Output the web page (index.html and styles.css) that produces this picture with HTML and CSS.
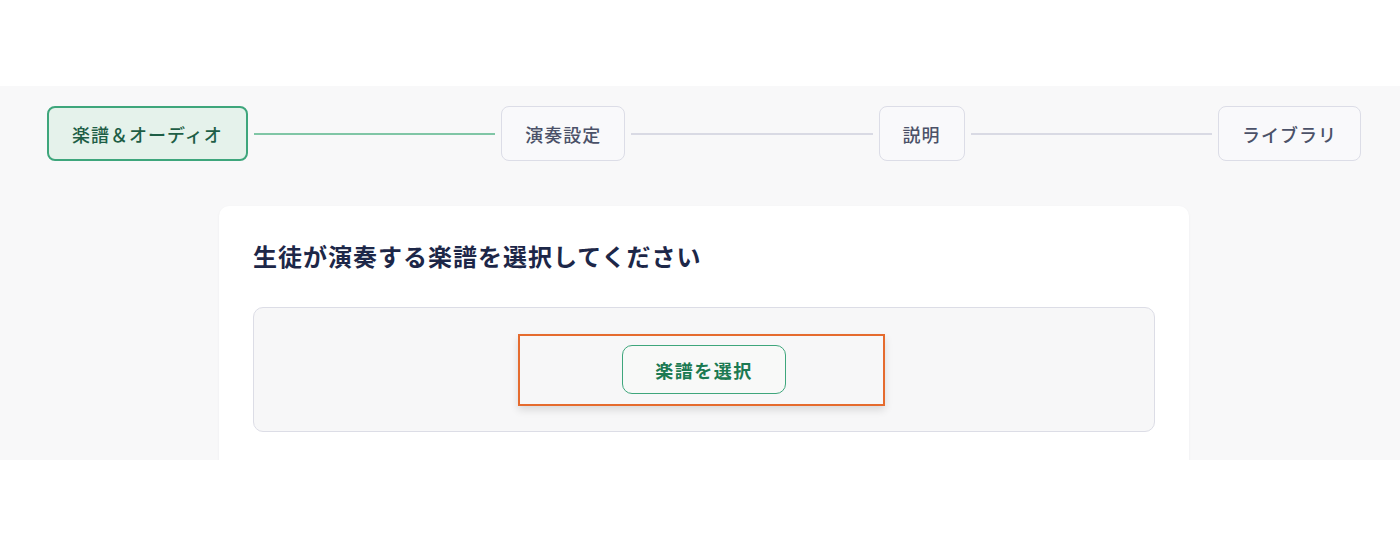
FILE: index.html
```html
<!DOCTYPE html>
<html lang="ja">
<head>
<meta charset="utf-8">
<link rel="stylesheet" href="styles.css">
</head>
<body>
<div class="top-space"></div>
<section class="stage">
  <nav class="steps">
    <div class="step active">楽譜＆オーディオ</div>
    <div class="line done"></div>
    <div class="step">演奏設定</div>
    <div class="line"></div>
    <div class="step">説明</div>
    <div class="line"></div>
    <div class="step">ライブラリ</div>
  </nav>
  <div class="card">
    <h2 class="title">生徒が演奏する楽譜を選択してください</h2>
    <div class="dropzone">
      <div class="highlight">
        <button class="pick">楽譜を選択</button>
      </div>
    </div>
  </div>
</section>
</body>
</html>
```

FILE: styles.css
```css
html, body {
  margin: 0;
  padding: 0;
  background: #ffffff;
  font-family: "Noto Sans CJK JP", "Noto Sans", sans-serif;
}
.top-space {
  height: 86px;
}
.stage {
  height: 374px;
  background: #f8f8f9;
  overflow: hidden;
  padding: 20px 39px 0 47px;
  box-sizing: border-box;
}
.steps {
  display: flex;
  align-items: center;
  gap: 6px;
}
.step {
  height: 55px;
  box-sizing: border-box;
  padding: 0 23px;
  display: flex;
  align-items: center;
  border: 1.5px solid #dcdde7;
  border-radius: 8px;
  background: #f9f9fb;
  color: #4b5168;
  font-size: 18px;
  font-weight: 500;
  letter-spacing: 1px;
  white-space: nowrap;
}
.step.active {
  background: #e5f2eb;
  border: 2px solid #3ea67c;
  color: #1e5e46;
}
.line {
  flex: 1;
  height: 2px;
  background: #d9dae4;
}
.line.done {
  background: #80c6a6;
}
.card {
  width: 970px;
  margin: 45px auto 0;
  background: #ffffff;
  border-radius: 10px;
  box-shadow: 0 1px 3px rgba(20, 30, 60, 0.05);
  padding: 32px 34px 40px;
  box-sizing: border-box;
  min-height: 300px;
}
.title {
  margin: 0 0 33px;
  font-size: 24px;
  line-height: 36px;
  font-weight: 700;
  color: #1d2748;
  letter-spacing: 1px;
}
.dropzone {
  height: 125px;
  box-sizing: border-box;
  border: 1.5px solid #dcdde6;
  border-radius: 10px;
  background: #f7f7f8;
  display: flex;
  align-items: center;
  justify-content: center;
}
.highlight {
  width: 367px;
  height: 72px;
  margin-right: 5px;
  box-sizing: border-box;
  border: 2px solid #e56b2e;
  background: #f7f7f8;
  box-shadow: 0 4px 8px rgba(0, 0, 0, 0.12);
  display: flex;
  align-items: center;
  justify-content: center;
}
.pick {
  width: 164px;
  height: 49px;
  margin-left: 5px;
  box-sizing: border-box;
  border: 1.5px solid #3ea67c;
  border-radius: 10px;
  background: #f8f9f8;
  color: #1b7a52;
  font-family: "Noto Sans CJK JP", "Noto Sans", sans-serif;
  font-size: 18px;
  font-weight: 700;
  letter-spacing: 1.5px;
}
```
